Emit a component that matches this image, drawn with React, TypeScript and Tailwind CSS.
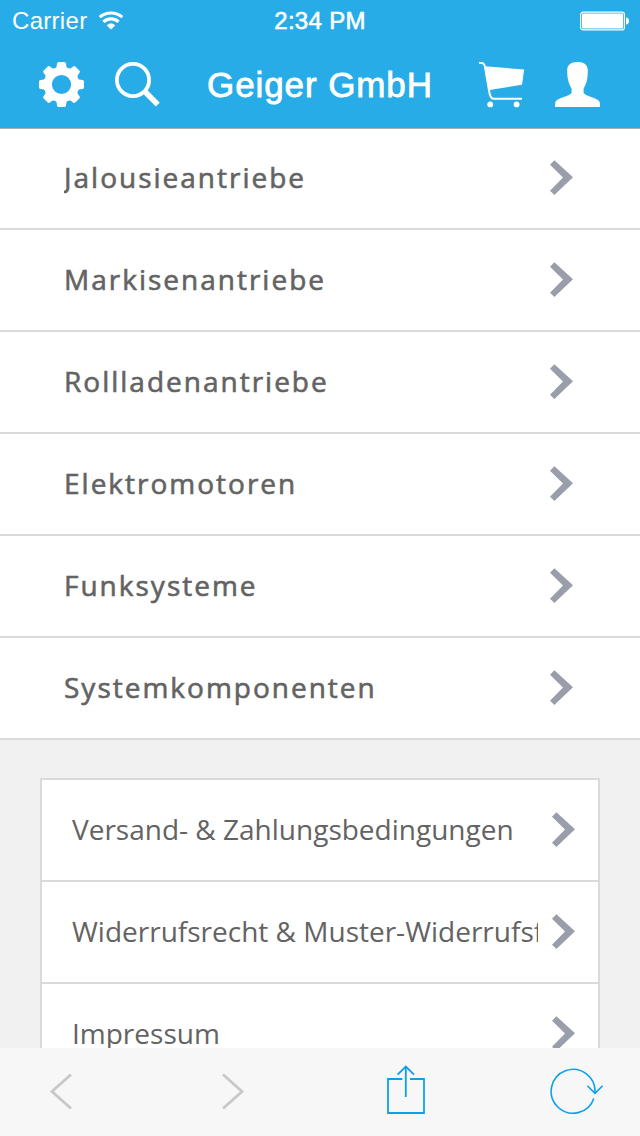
import React from "react";

const categories = [
  { name: "Jalousieantriebe" },
  { name: "Markisenantriebe" },
  { name: "Rollladenantriebe" },
  { name: "Elektromotoren" },
  { name: "Funksysteme" },
  { name: "Systemkomponenten" },
];

const infoLinks = [
  { name: "Versand- & Zahlungsbedingungen" },
  { name: "Widerrufsrecht & Muster-Widerrufsformular" },
  { name: "Impressum" },
];

function Chevron() {
  return (
    <svg width="24" height="36" viewBox="0 0 24 36" className="shrink-0">
      <path d="M4.4 0.3L23 17.3L4.4 35L0 30.8L13 17.4L0 4.8Z" fill="#9a9eaa" />
    </svg>
  );
}

function WifiIcon() {
  return (
    <svg width="26" height="20" viewBox="0 0 26 20" fill="none" stroke="white" strokeWidth="3.1">
      <path d="M1.7 6.2C8 0.6 18 0.6 24.3 6.2" />
      <path d="M5.4 10.8C9.8 6.9 16.2 6.9 20.6 10.8" />
      <path d="M8.8 14.4C11.2 12 14.8 12 17.2 14.4L13 18.4Z" fill="white" stroke="none" />
    </svg>
  );
}

function BatteryIcon() {
  return (
    <svg width="50" height="20" viewBox="0 0 50 20">
      <rect x="0.6" y="1.1" width="43.8" height="17.8" rx="2.5" fill="none" stroke="white" strokeWidth="1.2" />
      <rect x="2" y="2.5" width="41" height="15" rx="1" fill="white" />
      <path d="M46 6.5C50 6.5 50 13.5 46 13.5Z" fill="white" />
    </svg>
  );
}

function GearIcon() {
  return (
    <svg width="45" height="45" viewBox="-22.5 -22.5 45 45">
      <circle r="13.6" fill="none" stroke="white" strokeWidth="8" />
      {[0, 45, 90, 135, 180, 225, 270, 315].map((angle) => (
        <path
          key={angle}
          transform={`rotate(${angle})`}
          d="M-6.8 -15.8L-5 -17.5L-4.5 -21Q-4.2 -22.5 -2.7 -22.5H2.7Q4.2 -22.5 4.5 -21L5 -17.5L6.8 -15.8Z"
          fill="white"
        />
      ))}
    </svg>
  );
}

function SearchIcon() {
  return (
    <svg width="46" height="46" viewBox="0 0 46 46" fill="none" stroke="white">
      <circle cx="18" cy="18" r="16.1" strokeWidth="3.8" />
      <path d="M29.6 29.2L42.8 42.6" strokeWidth="5.6" />
    </svg>
  );
}

function CartIcon() {
  return (
    <svg width="46" height="46" viewBox="0 0 46 46">
      <path d="M6 4.2L45.2 7.6L43 22.8L10.6 28Z" fill="white" />
      <path d="M0 1.1H2.5Q5.3 1.1 6 5L10.5 31Q11.5 36.8 15 36.8H43" fill="none" stroke="white" strokeWidth="2" />
      <circle cx="11.2" cy="42.4" r="2.9" fill="white" />
      <circle cx="37.6" cy="42.4" r="2.9" fill="white" />
    </svg>
  );
}

function UserIcon() {
  return (
    <svg width="45" height="45" viewBox="0 0 45 45">
      <path
        d="M22.5 0C29.5 0 32.8 3 32.8 8.5C32.8 17 31.6 21.5 28.6 26.5V31C31 34 38 35 43 38Q45 39.5 45 42V45H0V42Q0 39.5 2 38C7 35 14 34 16.6 31V26.5C13.6 21.5 12.2 17 12.2 8.5C12.2 3 15.5 0 22.5 0Z"
        fill="white"
      />
    </svg>
  );
}

function ShareIcon() {
  return (
    <svg width="39" height="50" viewBox="0 0 39 50" fill="none" stroke="#0ba1ea" strokeWidth="1.8">
      <path d="M15.3 14H1V48H37V14H23" />
      <path d="M18.8 32V2" />
      <path d="M10.6 9.7L18.8 1.5L27 9.7" />
    </svg>
  );
}

function ReloadIcon() {
  return (
    <svg width="54" height="48" viewBox="0 0 54 48" fill="none" stroke="#0ba1ea" strokeWidth="1.6">
      <path d="M43.8 30.4A21.9 21.9 0 1 1 44.9 25.2" />
      <path d="M37.4 17.8L45 25.4L52.6 17.8" />
    </svg>
  );
}

export default function App() {
  return (
    <div className="flex h-[1136px] w-[640px] flex-col overflow-hidden bg-[#f1f1f1] text-[#636363]">
      {/* Header */}
      <header className="h-32 shrink-0 bg-[#27ace8] font-['Liberation_Sans',sans-serif] text-white">
        <div className="grid h-10 grid-cols-3 items-center pl-3 pr-[10px] text-2xl leading-10">
          <div className="flex items-center gap-[11px] pt-px">
            <span className="tracking-[0.3px]">Carrier</span>
            <WifiIcon />
          </div>
          <div className="pt-px pr-0.5 text-center tracking-[0.3px] [-webkit-text-stroke:0.6px_white]">2:34 PM</div>
          <div className="flex justify-end">
            <BatteryIcon />
          </div>
        </div>

        {/* Nav bar */}
        <div className="flex h-[88px] items-center justify-between pl-[39px] pr-10 pt-px">
          <div className="flex items-center gap-[31px]">
            <GearIcon />
            <SearchIcon />
          </div>
          <h1 className="pt-0.5 text-[35px] tracking-[0.9px] whitespace-nowrap [-webkit-text-stroke:0.8px_white]">
            Geiger GmbH
          </h1>
          <div className="flex items-center gap-[30px]">
            <CartIcon />
            <UserIcon />
          </div>
        </div>
      </header>

      <main className="min-h-0 flex-1 overflow-hidden font-['Open_Sans',sans-serif] text-[28px]">
        {/* Categories */}
        <ul className="border-t border-[#a9b0b4] bg-white">
          {categories.map((item) => (
            <li
              key={item.name}
              className="flex h-[102px] items-center justify-between border-b-2 border-[#dadada] pl-16 pr-[66px] tracking-[2px] first:h-[101px] first:pb-px [-webkit-text-stroke:0.6px_#636363]"
            >
              <span className="overflow-hidden pb-0.5">{item.name}</span>
              <Chevron />
            </li>
          ))}
        </ul>

        {/* Info links */}
        <ul className="mx-10 mt-[38px] border-2 border-[#dadada] bg-white">
          {infoLinks.map((item) => (
            <li
              key={item.name}
              className="flex h-[102px] items-center justify-between border-b-2 border-[#dadada] pl-[30px] pr-[22px]"
            >
              <span className="w-[466px] overflow-hidden pb-0.5 whitespace-nowrap">{item.name}</span>
              <Chevron />
            </li>
          ))}
        </ul>
      </main>

      {/* Browser toolbar */}
      <footer className="flex h-[88px] shrink-0 items-center bg-[#f7f7f7] pl-[49px]">
        <svg width="24" height="38" viewBox="0 0 24 38" fill="none" stroke="#c8c8c8" strokeWidth="2.8">
          <path d="M22 1.5L3 18.5L22 35.5" />
        </svg>
        <svg className="ml-[148px]" width="24" height="38" viewBox="0 0 24 38" fill="none" stroke="#c8c8c8" strokeWidth="2.8">
          <path d="M2 1.5L21 18.5L2 35.5" />
        </svg>
        <div className="ml-[142px] pb-1">
          <ShareIcon />
        </div>
        <div className="ml-[124px]">
          <ReloadIcon />
        </div>
      </footer>
    </div>
  );
}
